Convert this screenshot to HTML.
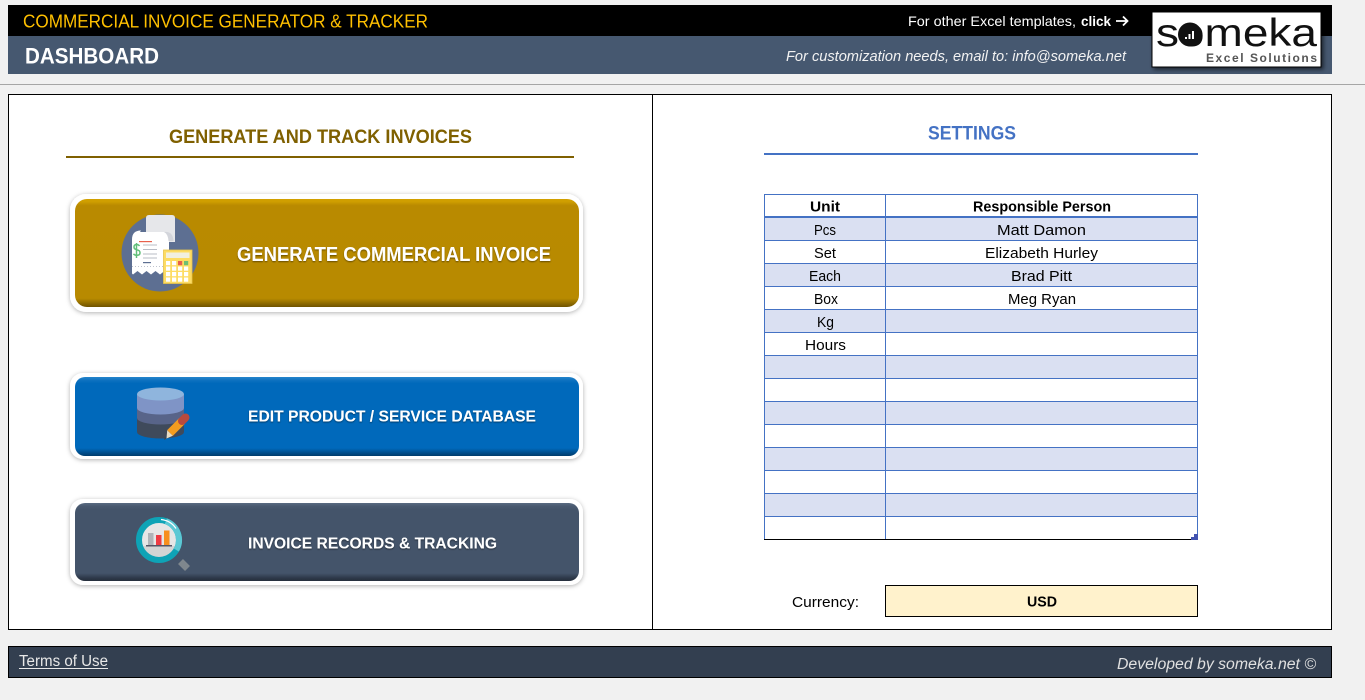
<!DOCTYPE html>
<html lang="en">
<head>
<meta charset="utf-8">
<title>Commercial Invoice Generator &amp; Tracker</title>
<style>
html,body{margin:0;padding:0;background:#f1f1f1;width:1365px;height:700px;overflow:hidden}
svg{display:block}
text{font-family:"Liberation Sans",sans-serif}
</style>
</head>
<body>
<svg width="1365" height="700" viewBox="0 0 1365 700" xmlns="http://www.w3.org/2000/svg">
<defs>
<filter id="sh" x="-5%" y="-15%" width="110%" height="130%"><feDropShadow dx="0" dy="1" stdDeviation="2.5" flood-color="#000" flood-opacity=".3"/></filter>
<filter id="ts" x="-5%" y="-30%" width="110%" height="160%"><feDropShadow dx="0" dy="1" stdDeviation=".8" flood-color="#000" flood-opacity=".45"/></filter>
<filter id="ls" x="-5%" y="-10%" width="115%" height="125%"><feDropShadow dx="2" dy="2" stdDeviation="2" flood-color="#000" flood-opacity=".6"/></filter>
<linearGradient id="g1" x1="0" y1="0" x2="0" y2="1"><stop offset="0" stop-color="#d2a000"/><stop offset=".025" stop-color="#cf9e00"/><stop offset=".06" stop-color="#b98a00"/><stop offset=".92" stop-color="#b88a00"/><stop offset=".965" stop-color="#8f6b00"/><stop offset="1" stop-color="#6f5300"/></linearGradient>
<linearGradient id="g2" x1="0" y1="0" x2="0" y2="1"><stop offset="0" stop-color="#2485cb"/><stop offset=".04" stop-color="#0f72c0"/><stop offset=".08" stop-color="#0069bb"/><stop offset=".9" stop-color="#0069bb"/><stop offset=".96" stop-color="#004d8a"/><stop offset="1" stop-color="#003c6c"/></linearGradient>
<linearGradient id="g3" x1="0" y1="0" x2="0" y2="1"><stop offset="0" stop-color="#5a6b82"/><stop offset=".04" stop-color="#4a5a70"/><stop offset=".08" stop-color="#44546a"/><stop offset=".9" stop-color="#44546a"/><stop offset=".96" stop-color="#2e394a"/><stop offset="1" stop-color="#252e3c"/></linearGradient>
</defs>

<!-- header -->
<rect x="8" y="5" width="1324" height="31" fill="#000"/>
<rect x="8" y="36" width="1324" height="38" fill="#465870"/>
<text x="23" y="27.500" font-size="18" fill="#ffc000" textLength="405" lengthAdjust="spacingAndGlyphs">COMMERCIAL INVOICE GENERATOR &amp; TRACKER</text>
<text x="25" y="63.500" font-size="22" font-weight="700" fill="#fff" textLength="134" lengthAdjust="spacingAndGlyphs">DASHBOARD</text>
<text x="908" y="26" font-size="14" fill="#fff" textLength="168" lengthAdjust="spacingAndGlyphs">For other Excel templates,</text>
<text x="1081" y="26" font-size="14" font-weight="700" fill="#fff" textLength="30" lengthAdjust="spacingAndGlyphs">click</text>
<path d="M1116 21h11M1123 16.500l4.500 4.500-4.500 4.500" fill="none" stroke="#fff" stroke-width="1.800"/>
<text x="786" y="61" font-size="14.500" font-style="italic" fill="#f2f2f2" textLength="340" lengthAdjust="spacingAndGlyphs">For customization needs, email to: info@someka.net</text>

<!-- logo -->
<rect x="1152" y="12" width="169" height="55" fill="#fff" stroke="#000" stroke-width="1" filter="url(#ls)"/>
<text x="1156" y="46" font-size="39" fill="#111" textLength="161" lengthAdjust="spacingAndGlyphs">someka</text>
<circle cx="1190" cy="34.500" r="12" fill="#111"/>
<path d="M1186 39v-2M1189.500 39v-5M1193 39v-8" stroke="#fff" stroke-width="2" fill="none"/>
<text x="1206" y="62" font-size="12" font-weight="700" fill="#555" textLength="111" lengthAdjust="spacing">Excel Solutions</text>

<!-- divider -->
<rect x="0" y="84" width="1365" height="1" fill="#a6a6a6"/>

<!-- main frame -->
<rect x="8.500" y="94.500" width="1323" height="535" fill="#fff" stroke="#000"/>
<rect x="652" y="95" width="1" height="534" fill="#000"/>

<!-- left heading -->
<text x="169" y="143" font-size="19.500" font-weight="700" fill="#7f6000" textLength="303" lengthAdjust="spacingAndGlyphs">GENERATE AND TRACK INVOICES</text>
<rect x="66" y="156" width="508" height="2" fill="#7f6000"/>

<!-- button 1 -->
<rect x="70" y="194" width="513" height="118" rx="16" fill="#fff" filter="url(#sh)"/>
<rect x="75" y="199" width="504" height="108" rx="12" fill="url(#g1)"/>
<text x="237" y="261" font-size="20" font-weight="700" fill="#fff" textLength="314" lengthAdjust="spacingAndGlyphs" filter="url(#ts)">GENERATE COMMERCIAL INVOICE</text>
<circle cx="160" cy="253" r="38.500" fill="#5d6f92"/>
<path d="M146 218q0-3 3-3h23q3 0 3 3v24h-29z" fill="#e6e7ea"/>
<path d="M140 232h26q3 1 3 9v33l-4.500-3-4.500 3.500-4.500-3.500-4.500 3.500-4.500-3.500-4.500 3.500-4.500-3.500-4.500 3.500-1-1v-34q0-9 9-9z" fill="#fff"/>
<path d="M164 232q9-1 9.500 9h-5q-.5-7-4.500-9z" fill="#d3d5db"/>
<rect x="139" y="241" width="13" height="1.200" fill="#e8604c"/>
<path d="M136.500 243v15M139.500 246q-1-1.500-3-1.500-2.500 0-2.500 2.500 0 2.200 3 2.800 3 .6 3 3 0 2.500-3 2.500-2.500 0-3.500-1.500" fill="none" stroke="#62bf7a" stroke-width="1.500"/>
<path d="M143 245h14M143 249.500h14M143 254h14M143 258h14" stroke="#b8bcc6" stroke-width="1" fill="none"/>
<rect x="143" y="262" width="8" height="1.200" fill="#5d6f92"/>
<path d="M132 266.500h35" stroke="#bfc3cd" stroke-width="1" stroke-dasharray="1 2"/>
<rect x="163.500" y="250" width="28.500" height="33.500" fill="#fddc63" stroke="#e8c44c" stroke-width=".8"/>
<rect x="166" y="252.500" width="23.500" height="5.500" fill="#f1efe0"/>
<g fill="#fff">
<rect x="166" y="261" width="4.200" height="4.200"/><rect x="172" y="261" width="4.200" height="4.200"/>
<rect x="166" y="266.500" width="4.200" height="4.200"/><rect x="172" y="266.500" width="4.200" height="4.200"/><rect x="178" y="266.500" width="4.200" height="4.200"/><rect x="184" y="266.500" width="4.200" height="4.200"/>
<rect x="166" y="272" width="4.200" height="4.200"/><rect x="172" y="272" width="4.200" height="4.200"/><rect x="178" y="272" width="4.200" height="4.200"/><rect x="184" y="272" width="4.200" height="4.200"/>
<rect x="166" y="277.500" width="4.200" height="4.200"/><rect x="172" y="277.500" width="4.200" height="4.200"/><rect x="178" y="277.500" width="4.200" height="4.200"/><rect x="184" y="277.500" width="4.200" height="4.200"/>
</g>
<rect x="178" y="261" width="4.200" height="4.200" fill="#e8604c"/>
<rect x="184" y="261" width="4.200" height="4.200" fill="#6fbf73"/>

<!-- button 2 -->
<rect x="70" y="373" width="513" height="86" rx="13" fill="#fff" filter="url(#sh)"/>
<rect x="75" y="377" width="504" height="79" rx="10" fill="url(#g2)"/>
<text x="248" y="421.500" font-size="16" font-weight="700" fill="#fff" textLength="288" lengthAdjust="spacingAndGlyphs" filter="url(#ts)">EDIT PRODUCT / SERVICE DATABASE</text>
<path d="M137 418v14a23.500 6.500 0 0 0 47 0v-14z" fill="#3f4a5b"/>
<path d="M137 408v10a23.500 6.500 0 0 0 47 0v-10z" fill="#586489"/>
<path d="M137 394v14a23.500 6.500 0 0 0 47 0v-14z" fill="#7f94c6"/>
<ellipse cx="160.500" cy="394" rx="23.500" ry="6.500" fill="#8fb5dd"/>
<path d="M170 433l12-12" stroke="#f39c1f" stroke-width="8" fill="none"/>
<path d="M182 421l3.500-3.500" stroke="#b94a3d" stroke-width="8" stroke-linecap="round" fill="none"/>
<path d="M167.200 430.200l5.600 5.600-6.300 2.700z" fill="#e8dcc4"/>
<path d="M166.500 438.500l-2.500 1.500 1-2.800z" fill="#444"/>

<!-- button 3 -->
<rect x="70" y="499" width="513" height="86" rx="13" fill="#fff" filter="url(#sh)"/>
<rect x="75" y="503" width="504" height="78" rx="10" fill="url(#g3)"/>
<text x="248" y="548.500" font-size="16" font-weight="700" fill="#fff" textLength="249" lengthAdjust="spacingAndGlyphs" filter="url(#ts)">INVOICE RECORDS &amp; TRACKING</text>
<circle cx="159" cy="540" r="17.500" fill="#e6e6e6"/>
<path d="M142 546h34a17.500 17.500 0 0 1-34 0z" fill="#d4d4d4"/>
<circle cx="159" cy="540" r="20" fill="none" stroke="#0ea3b6" stroke-width="6"/>
<path d="M165.800 521.200a20 20 0 0 1 10.500 28.800" fill="none" stroke="#5cc8d4" stroke-width="6"/>
<path d="M161 519.500a20.500 20.500 0 0 1 15 9" fill="none" stroke="#fff" stroke-width="1.200"/>
<rect x="148" y="533" width="5.500" height="12" fill="#b0b3b8"/>
<rect x="156" y="535" width="5.500" height="10" fill="#ee3a43"/>
<rect x="164" y="530.500" width="5.500" height="14.500" fill="#f78f1e"/>
<rect x="146" y="545" width="26" height="1.500" fill="#556"/>
<path d="M180.500 561.500l7 7" stroke="#7f878d" stroke-width="7" fill="none"/>

<!-- settings -->
<text x="928" y="139.500" font-size="19" font-weight="700" fill="#4472c4" textLength="88" lengthAdjust="spacingAndGlyphs">SETTINGS</text>
<rect x="764" y="153" width="434" height="2" fill="#4472c4"/>

<!-- table bands -->
<rect x="765" y="218" width="432" height="22" fill="#dae0f2"/>
<rect x="765" y="264" width="432" height="22" fill="#dae0f2"/>
<rect x="765" y="310" width="432" height="22" fill="#dae0f2"/>
<rect x="765" y="356" width="432" height="22" fill="#dae0f2"/>
<rect x="765" y="402" width="432" height="22" fill="#dae0f2"/>
<rect x="765" y="448" width="432" height="22" fill="#dae0f2"/>
<rect x="765" y="494" width="432" height="22" fill="#dae0f2"/>
<!-- table lines -->
<g fill="#4472c4">
<rect x="764" y="194" width="434" height="1"/>
<rect x="764" y="216" width="434" height="2"/>
<rect x="764" y="240" width="434" height="1"/>
<rect x="764" y="263" width="434" height="1"/>
<rect x="764" y="286" width="434" height="1"/>
<rect x="764" y="309" width="434" height="1"/>
<rect x="764" y="332" width="434" height="1"/>
<rect x="764" y="355" width="434" height="1"/>
<rect x="764" y="378" width="434" height="1"/>
<rect x="764" y="401" width="434" height="1"/>
<rect x="764" y="424" width="434" height="1"/>
<rect x="764" y="447" width="434" height="1"/>
<rect x="764" y="470" width="434" height="1"/>
<rect x="764" y="493" width="434" height="1"/>
<rect x="764" y="516" width="434" height="1"/>
<rect x="764" y="194" width="1" height="346"/>
<rect x="885" y="194" width="1" height="346"/>
<rect x="1197" y="194" width="1" height="346"/>
</g>
<rect x="764" y="539" width="434" height="1" fill="#000"/>
<path d="M1191 540v-3h3v-3h4v6z" fill="#4254b0"/>

<!-- table text -->
<g font-size="14.500" fill="#000">
<text x="810" y="211.500" font-weight="700" textLength="30" lengthAdjust="spacingAndGlyphs">Unit</text>
<text x="973" y="211.500" font-weight="700" textLength="138" lengthAdjust="spacingAndGlyphs">Responsible Person</text>
<text x="814" y="235" textLength="22" lengthAdjust="spacingAndGlyphs">Pcs</text>
<text x="814" y="258" textLength="22" lengthAdjust="spacingAndGlyphs">Set</text>
<text x="809" y="281" textLength="32" lengthAdjust="spacingAndGlyphs">Each</text>
<text x="814" y="304" textLength="24" lengthAdjust="spacingAndGlyphs">Box</text>
<text x="817" y="327" textLength="17" lengthAdjust="spacingAndGlyphs">Kg</text>
<text x="805" y="350" textLength="41" lengthAdjust="spacingAndGlyphs">Hours</text>
<text x="997" y="235" textLength="89" lengthAdjust="spacingAndGlyphs">Matt Damon</text>
<text x="985" y="258" textLength="113" lengthAdjust="spacingAndGlyphs">Elizabeth Hurley</text>
<text x="1011" y="281" textLength="61" lengthAdjust="spacingAndGlyphs">Brad Pitt</text>
<text x="1008" y="304" textLength="68" lengthAdjust="spacingAndGlyphs">Meg Ryan</text>
</g>

<!-- currency -->
<text x="792" y="607" font-size="14.500" fill="#000" textLength="67" lengthAdjust="spacingAndGlyphs">Currency:</text>
<rect x="885.500" y="585.500" width="312" height="31" fill="#fff2cc" stroke="#000"/>
<text x="1027" y="606.500" font-size="15" font-weight="700" fill="#000" textLength="30" lengthAdjust="spacingAndGlyphs">USD</text>

<!-- footer -->
<rect x="8.500" y="646.500" width="1323" height="31" fill="#333f50" stroke="#000"/>
<text x="19" y="666" font-size="15.500" fill="#e8e8e8" textLength="89" lengthAdjust="spacingAndGlyphs">Terms of Use</text>
<rect x="19" y="668" width="89" height="1" fill="#e8e8e8"/>
<text x="1117" y="669" font-size="15.500" font-style="italic" fill="#e0e0e0" textLength="199" lengthAdjust="spacingAndGlyphs">Developed by someka.net ©</text>
</svg>
</body>
</html>
